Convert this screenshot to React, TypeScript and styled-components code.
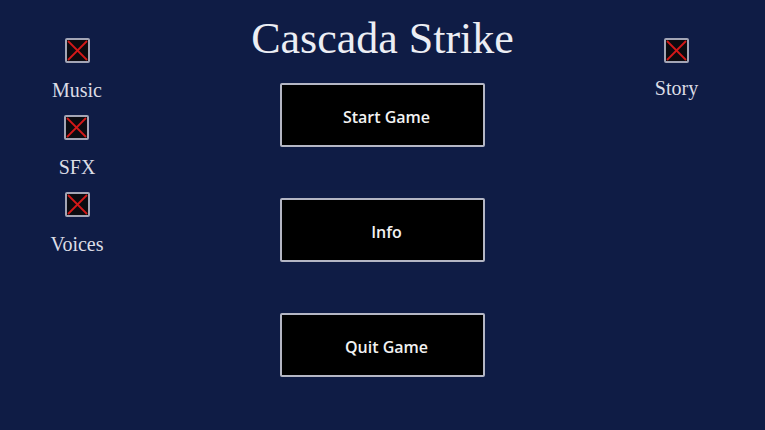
import React from "react";
import styled, { createGlobalStyle } from "styled-components";

const Global = createGlobalStyle`
  html, body { margin: 0; padding: 0; background: #0f1c45; }
  body { width: 765px; height: 430px; overflow: hidden; }
`;

const Screen = styled.div`
  width: 765px;
  height: 430px;
  background: #0f1c45;
  display: grid;
  grid-template-columns: 154px 1fr 154px;
  color: #e8e8ee;
`;

const SideColumn = styled.div<{ $padRight?: number }>`
  display: flex;
  flex-direction: column;
  align-items: center;
  padding-top: 38px;
  padding-right: ${(p) => p.$padRight ?? 0}px;
`;

const ToggleItem = styled.div`
  display: flex;
  flex-direction: column;
  align-items: center;
  height: 77px;
`;

const Box = styled.div`
  width: 21px;
  height: 21px;
  border: 2px solid #a3a5b5;
  border-radius: 2px;
  background: #0b0b10;
  display: flex;
  align-items: center;
  justify-content: center;
`;

const Label = styled.div<{ $gap: number }>`
  font-family: "Liberation Serif", "Times New Roman", serif;
  font-size: 20px;
  color: #dcdde6;
  margin-top: ${(p) => p.$gap}px;
  line-height: 22px;
`;

const Center = styled.div`
  display: flex;
  flex-direction: column;
  align-items: center;
`;

const Title = styled.h1`
  margin: 14px 0 0 0;
  font-family: "Liberation Serif", "Times New Roman", serif;
  font-weight: normal;
  font-size: 44px;
  line-height: 50px;
  color: #eceef4;
`;

const Menu = styled.div`
  display: flex;
  flex-direction: column;
  gap: 51px;
  margin-top: 19px;
`;

const MenuButton = styled.button`
  width: 205px;
  height: 64px;
  background: #000;
  border: 2px solid #b4b6c4;
  border-radius: 2px;
  color: #f2f2f2;
  font-family: "Open Sans", sans-serif;
  font-weight: 600;
  font-size: 16px;
  display: flex;
  align-items: center;
  justify-content: center;
  padding: 3px 0 0 8px;
  box-sizing: border-box;
  cursor: pointer;
`;

const Cross = () => (
  <svg width="21" height="21" viewBox="0 0 21 21">
    <line x1="1" y1="1" x2="20" y2="20" stroke="#d41818" strokeWidth="1.8" />
    <line x1="20" y1="1" x2="1" y2="20" stroke="#d41818" strokeWidth="1.8" />
  </svg>
);

const Toggle = ({ label, gap = 16 }: { label: string; gap?: number }) => (
  <ToggleItem>
    <Box>
      <Cross />
    </Box>
    <Label $gap={gap}>{label}</Label>
  </ToggleItem>
);

export default function App() {
  return (
    <>
      <Global />
      <Screen>
        <SideColumn>
          <Toggle label="Music" />
          <Toggle label="SFX" />
          <Toggle label="Voices" />
        </SideColumn>
        <Center>
          <Title>Cascada Strike</Title>
          <Menu>
            <MenuButton>Start Game</MenuButton>
            <MenuButton>Info</MenuButton>
            <MenuButton>Quit Game</MenuButton>
          </Menu>
        </Center>
        <SideColumn $padRight={23}>
          <Toggle label="Story" gap={14} />
        </SideColumn>
      </Screen>
    </>
  );
}
